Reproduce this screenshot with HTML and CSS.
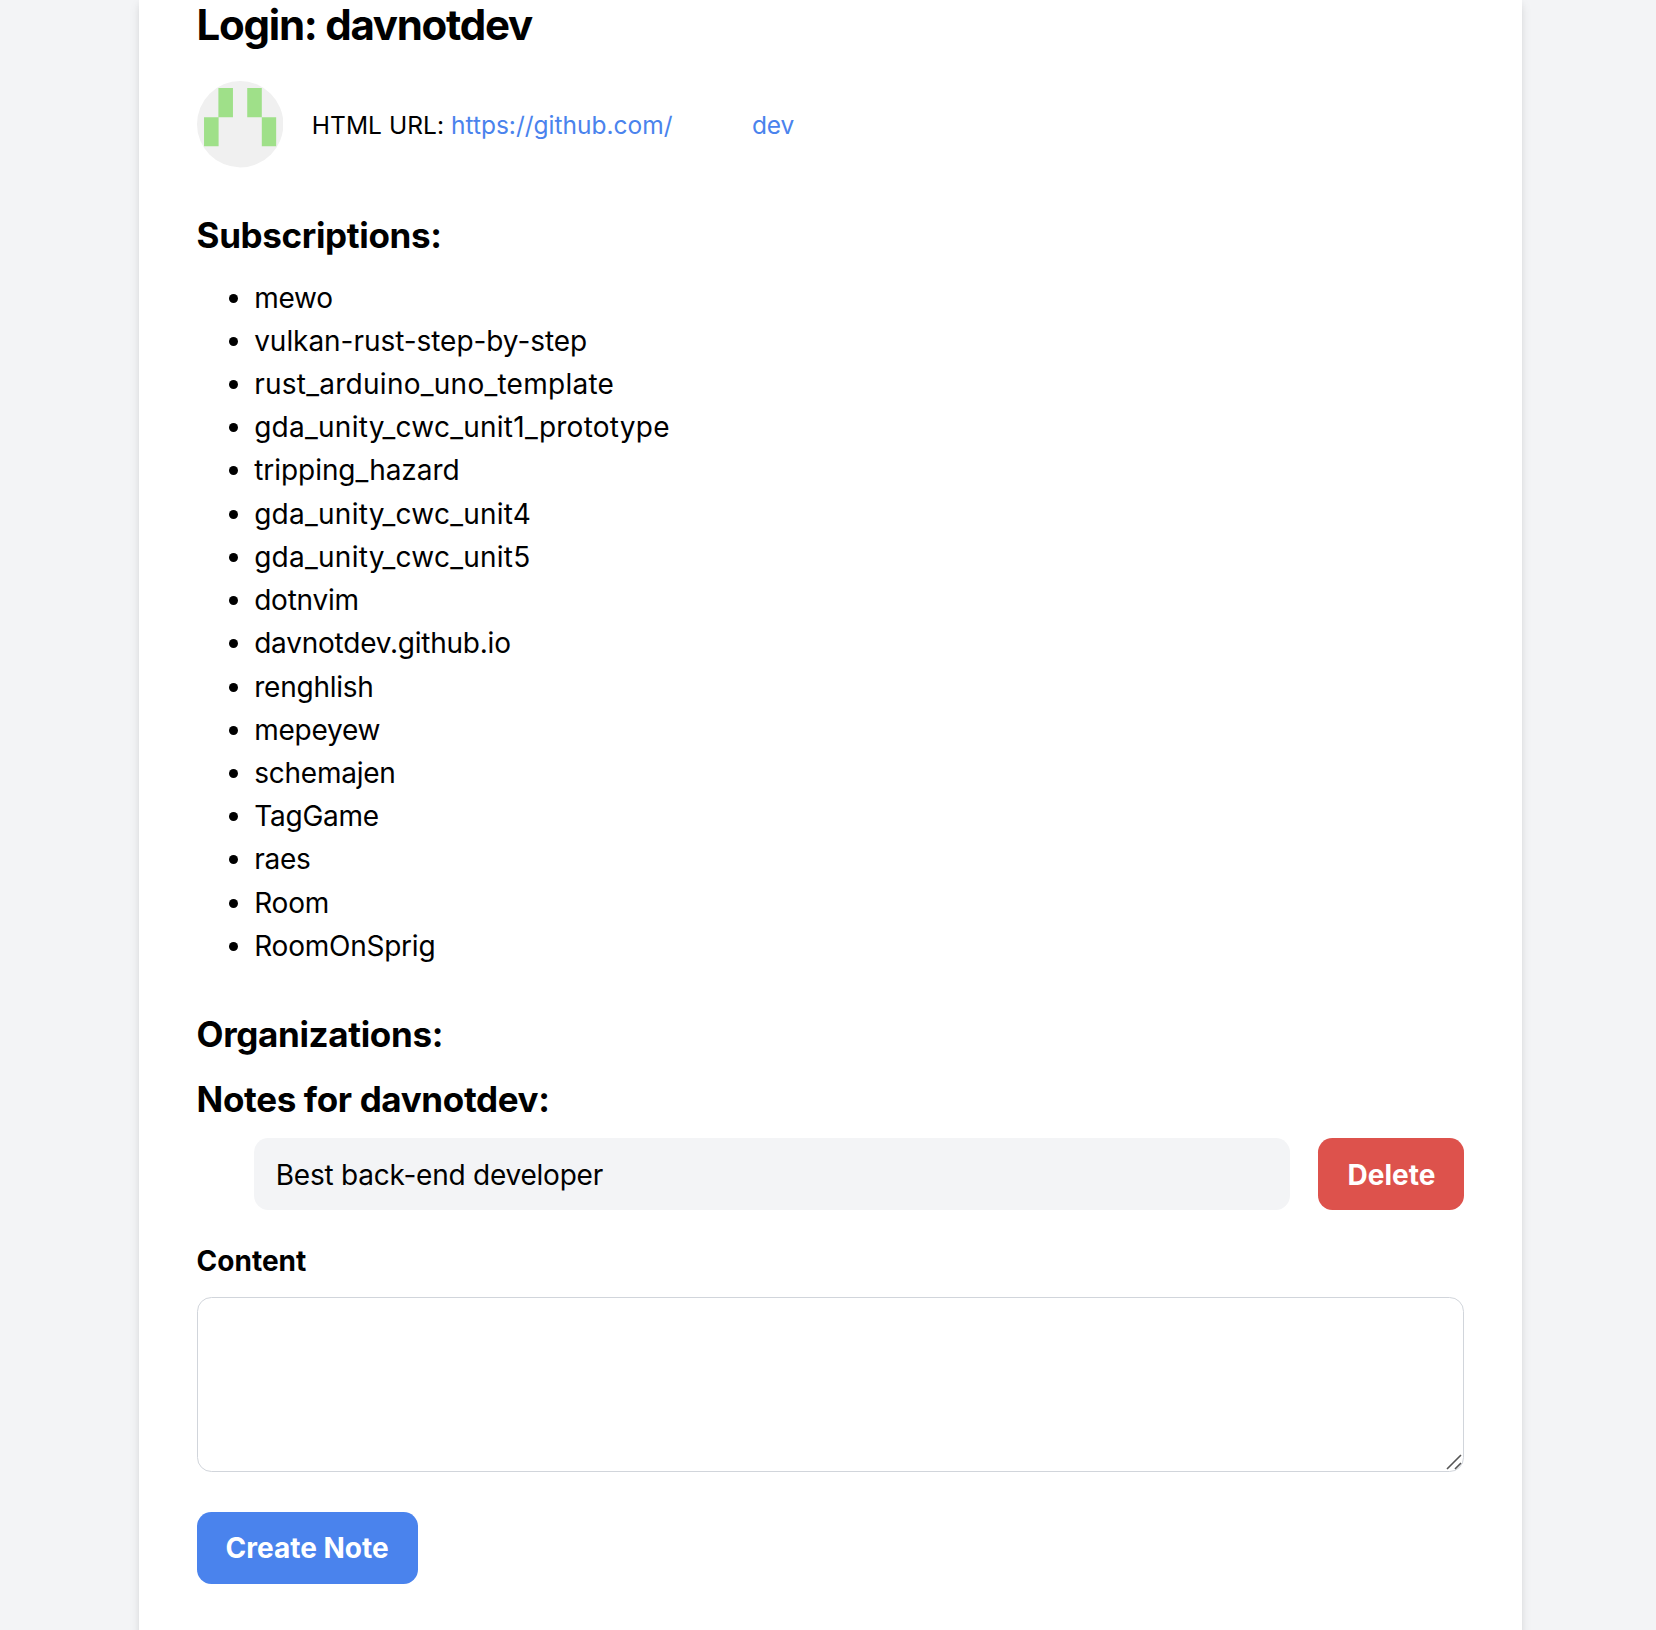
FILE: index.html
```
<!DOCTYPE html>
<html lang="en">
<head>
<meta charset="utf-8">
<title>davnotdev</title>
<link rel="stylesheet" href="styles.css">
</head>
<body>
<main class="card">
  <h1 class="login">Login: davnotdev</h1>
  <div class="profile">
    <svg class="avatar" viewBox="0 0 86 86" aria-hidden="true">
      <circle cx="43" cy="43" r="43" fill="#f0f0f0"/>
      <path d="M21.3 7h14.5v29H21.3zM50 7h14.5v29H50zM7 36h14.5v29H7zM64.5 36h14.3v29H64.5z" fill="#9fe089"/>
    </svg>
    <p class="url">HTML URL: <a class="link"><span class="origin">https://github.com/</span><span class="tail">dev</span></a></p>
  </div>
  <h2 class="heading">Subscriptions:</h2>
  <ul class="repos">
    <li>mewo</li>
    <li class="even">vulkan-rust-step-by-step</li>
    <li class="wide">rust_arduino_uno_template</li>
    <li class="wide">gda_unity_cwc_unit1_prototype</li>
    <li class="even">tripping_hazard</li>
    <li class="wide">gda_unity_cwc_unit4</li>
    <li class="wide">gda_unity_cwc_unit5</li>
    <li>dotnvim</li>
    <li>davnotdev.github.io</li>
    <li>renghlish</li>
    <li>mepeyew</li>
    <li>schemajen</li>
    <li>TagGame</li>
    <li>raes</li>
    <li>Room</li>
    <li>RoomOnSprig</li>
  </ul>
  <h2 class="heading">Organizations:</h2>
  <h2 class="heading">Notes for davnotdev:</h2>
  <div class="note">
    <p class="note-text">Best back-end developer</p>
    <button class="btn delete" type="button">Delete</button>
  </div>
  <form class="form">
    <label class="field-label" for="content">Content</label>
    <div class="field">
      <textarea class="input" id="content"></textarea>
      <svg class="grip" viewBox="0 0 16 16" aria-hidden="true"><path d="M1 15L15 1M9 15L15 9"/></svg>
    </div>
    <button class="btn create" type="button">Create Note</button>
  </form>
</main>
</body>
</html>
```
FILE: styles.css
```
* { box-sizing: border-box; }
html { font-size: 28.8px; }
body {
  margin: 0;
  height: 1630px;
  overflow: hidden;
  background: #f3f4f6;
  color: #000;
  font-family: Inter, "Liberation Sans", sans-serif;
  font-size: 28px;
  line-height: 1.5rem;
  letter-spacing: -0.23px;
}
h1, h2, p, ul { margin: 0; }
.card {
  display: flow-root;
  width: 1383px;
  height: 1640px;
  margin-left: 139px;
  padding: 0 2rem;
  background: #fff;
  box-shadow: 0 4px 11px -1px rgba(0, 0, 0, 0.1), 0 2px 7px -1px rgba(0, 0, 0, 0.06);
}
.login {
  margin: -3.6px 0 27.2px;
  font-size: 42px;
  font-weight: 650;
  line-height: 2rem;
  letter-spacing: -1.28px;
}
.profile { display: flex; align-items: center; gap: 1rem; margin-bottom: 42.3px; }
.avatar { width: 3rem; height: 3rem; }
.url { padding-top: 3px; font-size: 24.5px; letter-spacing: 0.05px; }
.link { color: #4a83ed; }
.origin { letter-spacing: 0; }
.tail { margin-left: 79.5px; letter-spacing: -0.2px; }
.heading {
  margin-bottom: 0.5rem;
  font-size: 35px;
  font-weight: 650;
  line-height: 1.75rem;
  letter-spacing: -0.35px;
}
.repos { margin-bottom: 40.9px; padding: 2px 0 0 2rem; }
.even { letter-spacing: -0.05px; }
.wide { letter-spacing: 0.26px; }
.note { display: flex; gap: 1rem; padding-left: 2rem; margin-bottom: 1rem; }
.note-text {
  flex: 1;
  padding: 15.4px 0.75rem 13.4px;
  border-radius: 0.5rem;
  background: #f3f4f6;
}
.btn {
  height: 2.5rem;
  padding: 2px 1rem 0;
  border: 0;
  border-radius: 0.5rem;
  color: #fff;
  font: inherit;
  font-weight: 650;
  letter-spacing: 0;
  white-space: nowrap;
}
.delete { width: 146px; background: #dd524c; }
.create { width: 221px; background: #4a83ed; }
.field-label {
  display: block;
  padding-top: 1px;
  margin-bottom: 13.4px;
  font-weight: 650;
  letter-spacing: 0;
}
.field { position: relative; margin-bottom: 40px; }
.input {
  display: block;
  width: 100%;
  height: 175px;
  border: 1px solid #d1d5db;
  border-radius: 0.5rem;
  resize: none;
  background: #fff;
}
.grip {
  position: absolute;
  right: 2.5px;
  bottom: 1.5px;
  width: 16px;
  height: 16px;
  stroke: #555;
  stroke-width: 1.6;
}
```
